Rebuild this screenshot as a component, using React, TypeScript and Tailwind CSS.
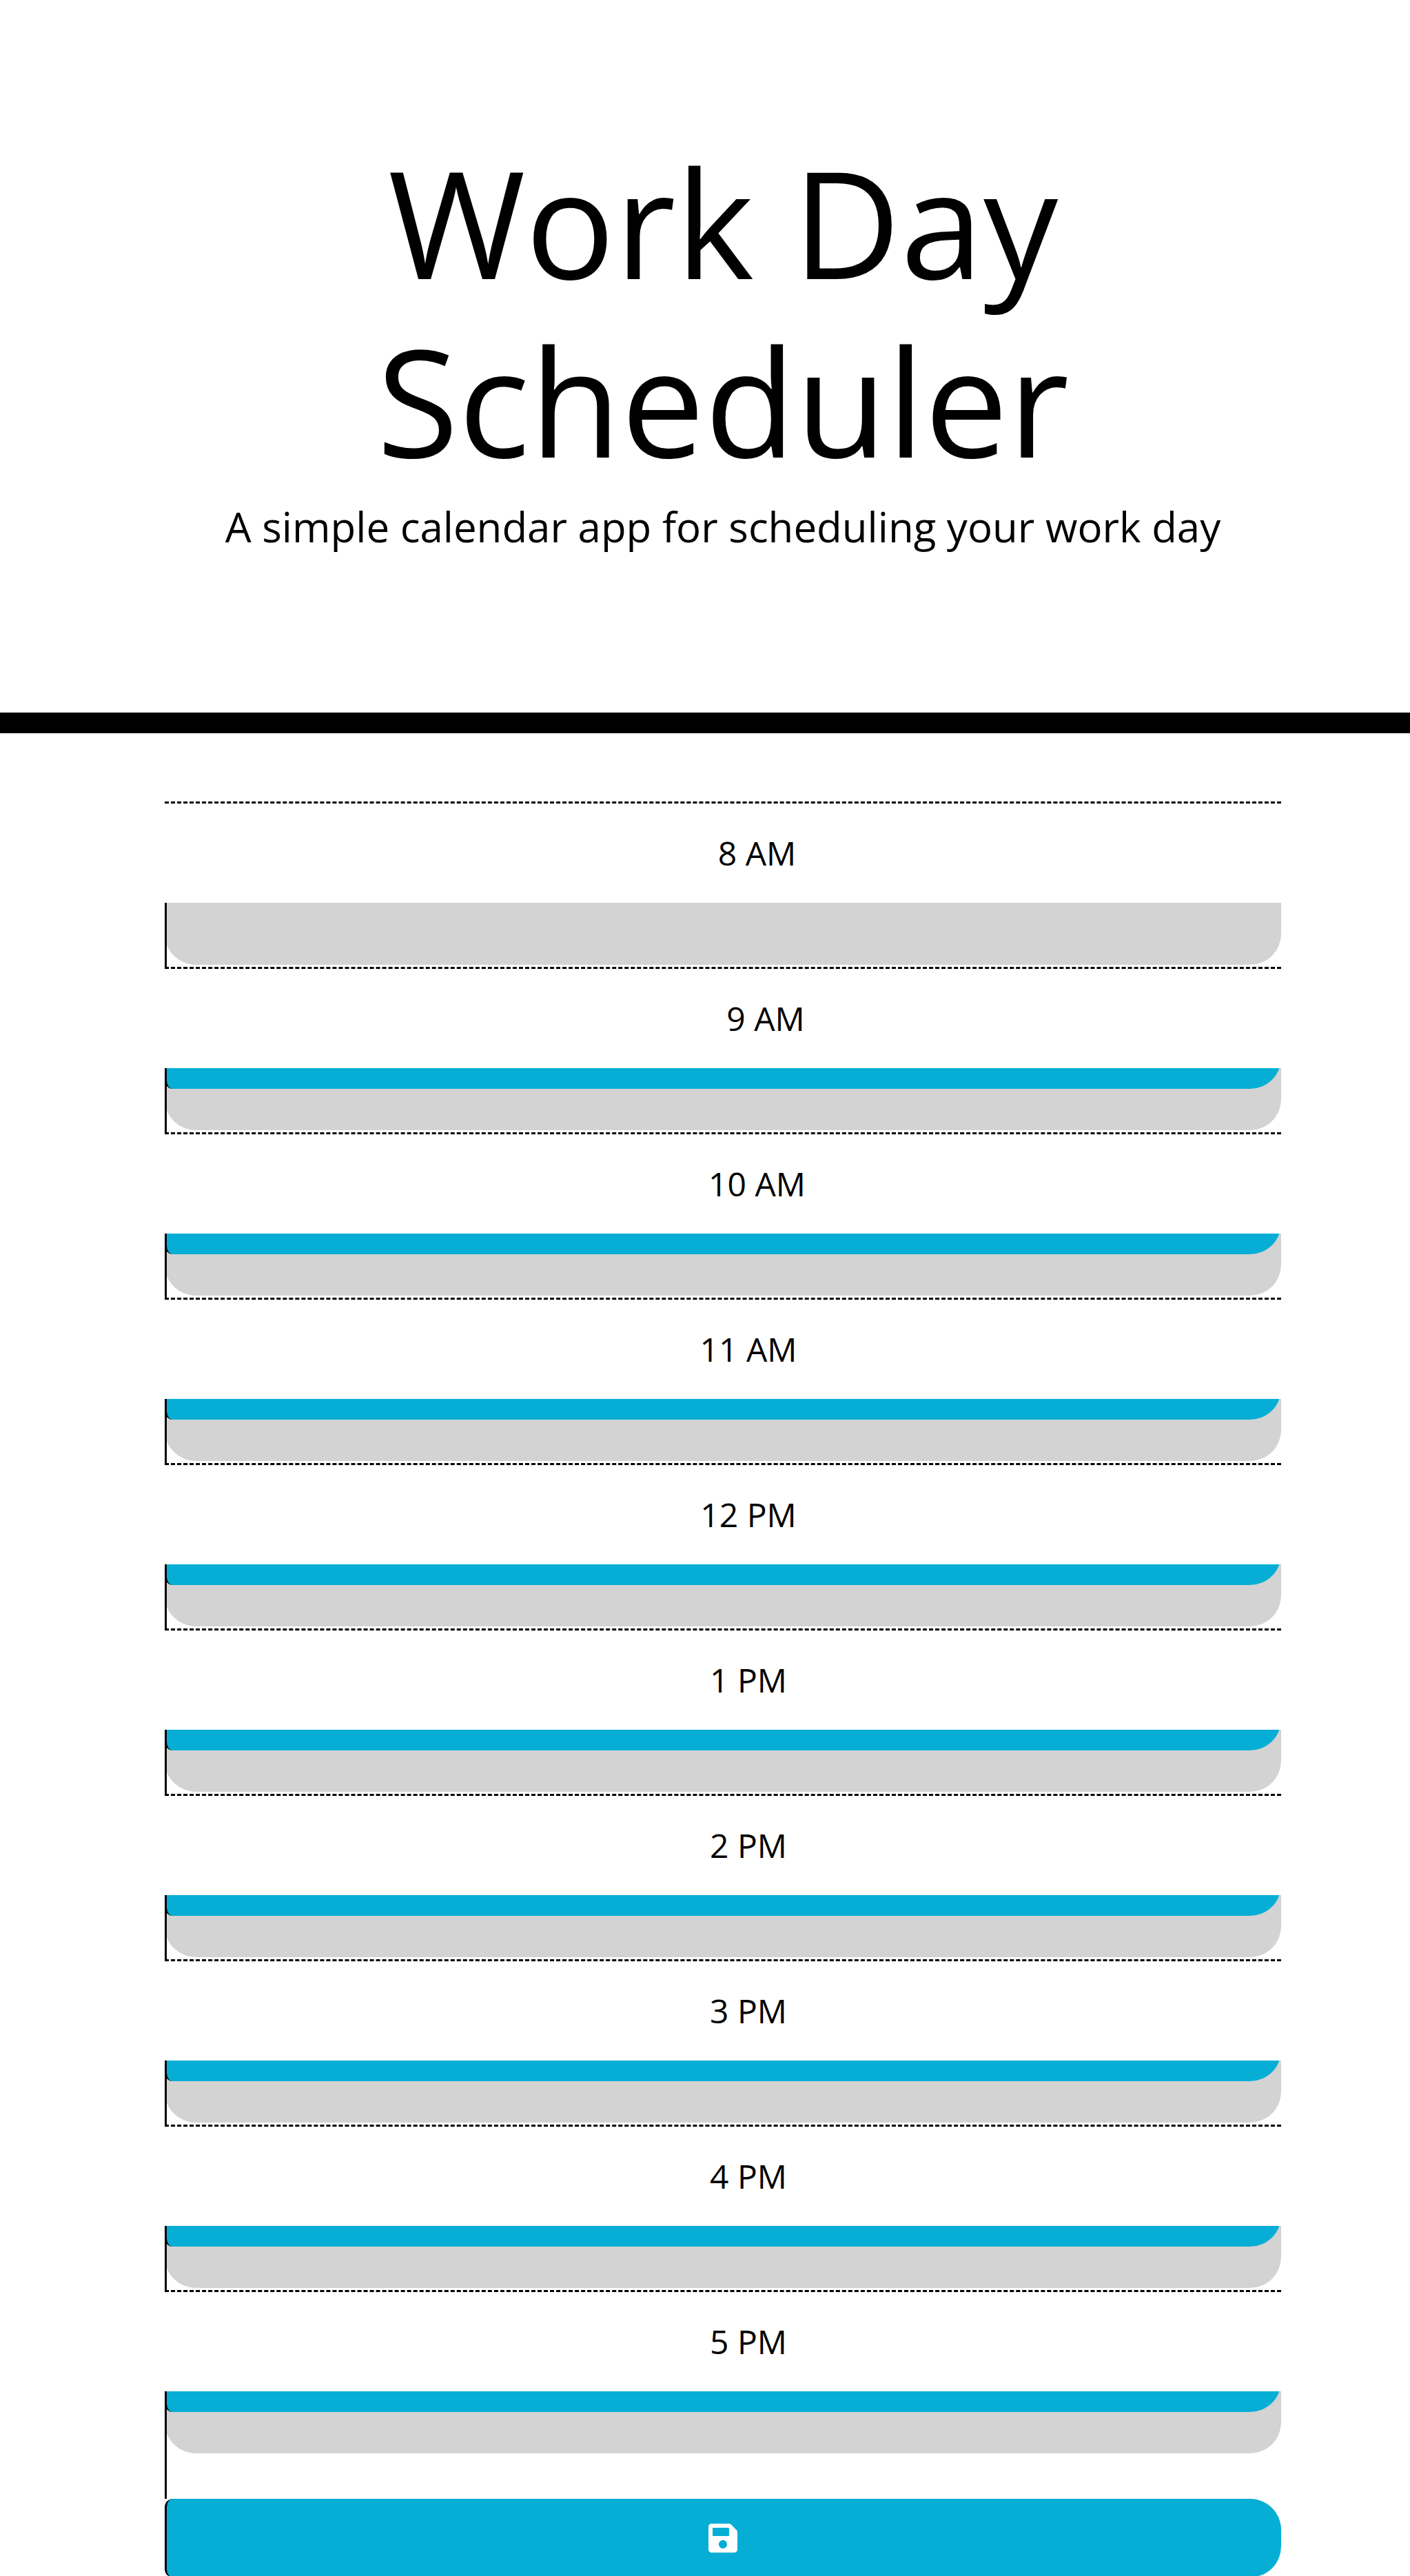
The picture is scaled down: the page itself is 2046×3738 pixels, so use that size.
import { FaSave } from "react-icons/fa";

type Slot = { label: string; indent: string };

const slots: Slot[] = [
  { label: "8 AM", indent: "pl-[99px]" },
  { label: "9 AM", indent: "pl-[124px]" },
  { label: "10 AM", indent: "pl-[99px]" },
  { label: "11 AM", indent: "pl-[74px]" },
  { label: "12 PM", indent: "pl-[74px]" },
  { label: "1 PM", indent: "pl-[74px]" },
  { label: "2 PM", indent: "pl-[74px]" },
  { label: "3 PM", indent: "pl-[74px]" },
  { label: "4 PM", indent: "pl-[74px]" },
  { label: "5 PM", indent: "pl-[74px]" },
];

function TimeBlock({ slot, last }: { slot: Slot; last: boolean }) {
  const id = "slot-" + slot.label.replace(" ", "-").toLowerCase();
  return (
    <div>
      <label
        htmlFor={id}
        className={`relative z-30 block border-t-[3px] border-dashed border-black bg-white py-9 text-center text-5xl leading-[72px] ${slot.indent}`}
      >
        {slot.label}
      </label>
      {/* The save button hangs below the block; the next hour label covers its upper part. */}
      <div className={last ? "relative" : "relative h-[93px]"}>
        <span className="absolute top-0 left-0 z-20 h-[156px] w-[3px] bg-black" />
        <textarea
          id={id}
          className="block h-[90px] w-full resize-none overflow-hidden rounded-b-[45px] bg-[#d3d3d3] px-9 py-2 text-5xl text-white outline-none"
        />
        <button
          type="button"
          aria-label={`Save ${slot.label}`}
          className="relative z-10 mt-[66px] flex h-[114px] w-full items-center justify-center rounded-l-xl rounded-r-[45px] border-l-[3px] border-black bg-[#06aed5] pr-1 text-5xl text-white"
        >
          <FaSave />
        </button>
      </div>
    </div>
  );
}

export default function App() {
  return (
    <div className="bg-white font-['Open_Sans',sans-serif] text-black">
      <header className="border-b-[30px] border-black pt-48 pb-[225px] pl-[52px] text-center">
        <h1 className="mx-auto max-w-[1620px] text-[216px] leading-[259px]">
          Work Day
          <br />
          Scheduler
        </h1>
        <p className="mt-[9px] text-6xl leading-[90px]">
          A simple calendar app for scheduling your work day
        </p>
      </header>
      <main className="pt-[99px] pr-[187px] pl-[239px]">
        {slots.map((slot, i) => (
          <TimeBlock key={slot.label} slot={slot} last={i === slots.length - 1} />
        ))}
      </main>
    </div>
  );
}
